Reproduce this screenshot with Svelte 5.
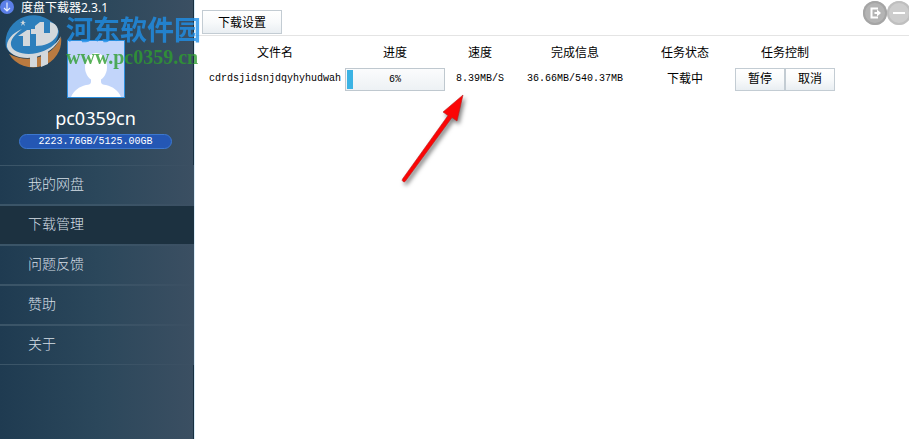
<script lang="ts">
  const menu = ['我的网盘', '下载管理', '问题反馈', '赞助', '关于'];
  let active = $state('下载管理');

  const tasks = [
    { name: 'cdrdsjidsnjdqyhyhudwah', progress: 6, speed: '8.39MB/S', info: '36.66MB/540.37MB', status: '下载中' },
  ];
</script>

<div class="app">
  <aside>
    <div class="profile">
      <div class="title">
        <svg width="14" height="14" viewBox="0 0 14 14" aria-hidden="true">
          <circle cx="7" cy="7" r="7" fill="#5b7fe8" />
          <path d="M7 2.5v8.5M4 8l3 3 3-3" fill="none" stroke="#e6eeff" stroke-width="1.2" />
        </svg>
        <h1>度盘下载器2.3.1</h1>
      </div>
      <div class="avatar">
        <svg width="56" height="56" viewBox="0 0 56 56" aria-hidden="true">
          <rect width="56" height="56" fill="#c2d5fa" />
          <ellipse cx="28" cy="26" rx="11" ry="14" fill="#fff" />
          <path d="M23 36h10v5c0 2 2 3 5 3 7 2 12 5 15 12H3c3-7 8-10 15-12 3 0 5-1 5-3z" fill="#fff" />
        </svg>
      </div>
      <p class="user">pc0359cn</p>
      <p class="quota">2223.76GB/5125.00GB</p>
    </div>

    <nav>
      {#each menu as item}
        <button class="item" class:active={active === item} onclick={() => (active = item)}>{item}</button>
      {/each}
    </nav>
    <div class="rest"></div>
  </aside>

  <main>
    <header>
      <button class="btn settings">下载设置</button>
      <div class="window">
        <button class="round exit" aria-label="退出">
          <svg width="24" height="24" viewBox="0 0 24 24" fill="none" stroke="#fff" stroke-width="2" aria-hidden="true">
            <path d="M14 8.500V7.500H8.500v9H14v-1M11.500 12H15" />
            <path d="M14 8.500l4 3.500-4 3.500z" fill="#fff" stroke="none" />
          </svg>
        </button>
        <button class="round" aria-label="最小化">
          <svg width="24" height="24" viewBox="0 0 24 24" aria-hidden="true">
            <path d="M6 12h12" stroke="#fff" stroke-width="2" />
          </svg>
        </button>
      </div>
    </header>

    <table>
      <colgroup>
        <col class="c-name" /><col class="c-mid" /><col class="c-speed" />
        <col class="c-info" /><col class="c-mid" /><col class="c-mid" />
      </colgroup>
      <thead>
        <tr><th>文件名</th><th>进度</th><th>速度</th><th>完成信息</th><th>任务状态</th><th>任务控制</th></tr>
      </thead>
      <tbody>
        {#each tasks as task}
          <tr>
            <td class="mono">{task.name}</td>
            <td class="mono">
              <div class="progress" role="progressbar" aria-label="进度" aria-valuenow={task.progress}>
                <div class="fill" style="width: {task.progress}%"></div>
                <span>{task.progress}%</span>
              </div>
            </td>
            <td class="mono">{task.speed}</td>
            <td class="mono">{task.info}</td>
            <td>{task.status}</td>
            <td>
              <div class="actions">
                <button class="btn">暂停</button>
                <button class="btn">取消</button>
              </div>
            </td>
          </tr>
        {/each}
      </tbody>
    </table>

    <svg class="arrow" width="76" height="98" viewBox="0 0 76 98" aria-hidden="true">
      <path d="M7.500 88L53 24.500l-5-3.500L68 4l-6 26-5-3.500L10.500 90a1.800 1.800 0 0 1-3-2z" fill="#fb0505" stroke="#b92020" stroke-width="0.600" />
    </svg>
  </main>

  <div class="watermark">
    <svg width="58" height="58" viewBox="0 0 58 58" aria-hidden="true">
      <path d="M2 35A28 27 0 0 1 55 19C54 34 42 44 26 45 14 46 5 42 2 35z" fill="#2f8fd6" />
      <path d="M57 25A28 27 0 0 1 5 42C24 52 48 46 57 25z" fill="#e08a3c" />
      <path d="M18 17C8 21 2 29 3 35c2 9 18 14 32 9 12-4 20-13 22-20-5 9-14 15-24 17-12 3-25-1-26-8-1-5 4-11 11-16z" fill="#fff" />
      <path d="M14 24l9-6h3v16h-7V24zM31 14l5-4h4v11h6V10c8 2 10 9 6 15-4 6-12 9-20 9V22h-5v-5h4z" fill="#fff" />
      <path d="M26 44h7v11h-7zM37 41l7-3v14l-7 3z" fill="#fff" />
      <path d="M19 8l1 2h2l-2 1 1 3-2-2-2 2 1-3-2-1h2z" fill="#fff" />
    </svg>
    <div>
      <p class="site">河东软件园</p>
      <p class="url">www.pc0359.cn</p>
    </div>
  </div>
</div>

<style>
  :global(body) {
    margin: 0;
    background: #fff;
  }

  .app {
    position: relative;
    display: flex;
    min-height: 100vh;
    overflow: hidden;
    font-family: 'Noto Sans', 'Noto Sans CJK SC', sans-serif;
    font-size: 12px;
    color: #000;
  }

  p, h1 { margin: 0; }

  button {
    font: inherit;
    cursor: pointer;
  }

  svg { display: block; }

  /* sidebar */
  aside {
    display: flex;
    flex-direction: column;
    flex: none;
    width: 194px;
    background: linear-gradient(90deg, #1f3b51, #2b475b 50%, #3b4f62);
  }

  .profile {
    display: flex;
    flex-direction: column;
    align-items: center;
    box-sizing: border-box;
    height: 165px;
    padding-right: 2px;
    border-right: 1px solid #182f40;
  }

  .title {
    display: flex;
    align-self: stretch;
    gap: 7px;
    height: 40px;
  }

  h1 {
    font-size: 12px;
    font-weight: 400;
    line-height: 15px;
    color: #fff;
  }

  .avatar { border: 1px solid #2e8fdd; }

  .user {
    margin-top: 7px;
    font-size: 18px;
    line-height: 26px;
    color: #fff;
  }

  .quota {
    width: 151px;
    margin-top: 3px;
    border: 1px solid #3d78cf;
    border-radius: 8px;
    background: #2457b4;
    font-family: 'Liberation Mono', monospace;
    font-size: 10px;
    line-height: 13px;
    text-align: center;
    color: #fff;
  }

  .item {
    display: block;
    width: 100%;
    height: 40px;
    padding: 0 28px 2px;
    border: 0;
    border-bottom: 2px solid;
    border-image: linear-gradient(90deg, #3b5568, #3b5568 50%, #3b4f62) 1;
    background: none;
    font-size: 14px;
    font-weight: 300;
    line-height: 20px;
    text-align: left;
    color: #d5dfe6;
  }

  .item:first-child {
    height: 41px;
    border-top: 1px solid;
  }

  .item:last-child {
    height: 39px;
    border-bottom-width: 1px;
  }

  .item.active { background: #1c3140; }

  .rest {
    flex: 1;
    border-right: 1px solid #182f40;
  }

  /* content */
  main {
    position: relative;
    flex: 1;
    border-left: 1px solid #d9ecf8;
  }

  header {
    display: flex;
    align-items: flex-end;
    justify-content: space-between;
    height: 35px;
    padding-left: 7px;
    border-bottom: 1px solid #e4e4e4;
  }

  .btn {
    height: 23px;
    padding: 0;
    border: 1px solid #c3ccd3;
    background: linear-gradient(#fff, #f8fafb 50%, #e9eef2);
    color: #000;
  }

  .settings {
    width: 80px;
    height: 24px;
    margin-bottom: 1px;
  }

  .window {
    display: flex;
    align-self: flex-start;
    margin: 1px -2px 0 0;
  }

  .round {
    width: 24px;
    height: 24px;
    padding: 0;
    border: 0;
    border-radius: 50%;
    background: #cdcdcd;
    box-shadow: inset 0 0 0 2px #bfbfbf;
  }

  .exit {
    background: #b4b4b4;
    box-shadow: inset 0 0 0 2px #a5a5a5;
  }

  table {
    width: 630px;
    margin: 4px 0 0 10px;
    border-collapse: collapse;
    table-layout: fixed;
    text-align: center;
  }

  .c-name { width: 140px; }
  .c-mid { width: 100px; }
  .c-speed { width: 70px; }
  .c-info { width: 120px; }

  th, td {
    height: 26px;
    padding: 0;
    font-weight: 400;
    line-height: 16px;
  }

  .mono {
    font-family: 'Liberation Mono', monospace;
    font-size: 10px;
  }

  .progress {
    display: grid;
    grid-template-columns: 100%;
    box-sizing: border-box;
    height: 23px;
    padding: 1px;
    border: 1px solid #bfc8cf;
    background: linear-gradient(#fbfcfd, #edf1f4);
    line-height: 19px;
  }

  .fill, .progress span { grid-area: 1 / 1; }
  .fill { background: #3bb3e4; }

  .actions { display: flex; }
  .actions .btn { flex: 1; }

  .arrow {
    position: absolute;
    left: 200px;
    top: 91px;
    filter: drop-shadow(2px 3px 2px rgba(0, 0, 0, 0.5));
    pointer-events: none;
  }

  .watermark {
    position: absolute;
    left: 4px;
    top: 12px;
    display: flex;
    gap: 4px;
    pointer-events: none;
    opacity: 0.8;
  }

  .site {
    margin-top: 3px;
    font-size: 27px;
    font-weight: 700;
    line-height: 30px;
    color: #1f8fe8;
  }

  .url {
    font-family: 'Liberation Serif', serif;
    font-size: 20px;
    font-weight: 700;
    line-height: 24px;
    color: #2f9e30;
  }
</style>
